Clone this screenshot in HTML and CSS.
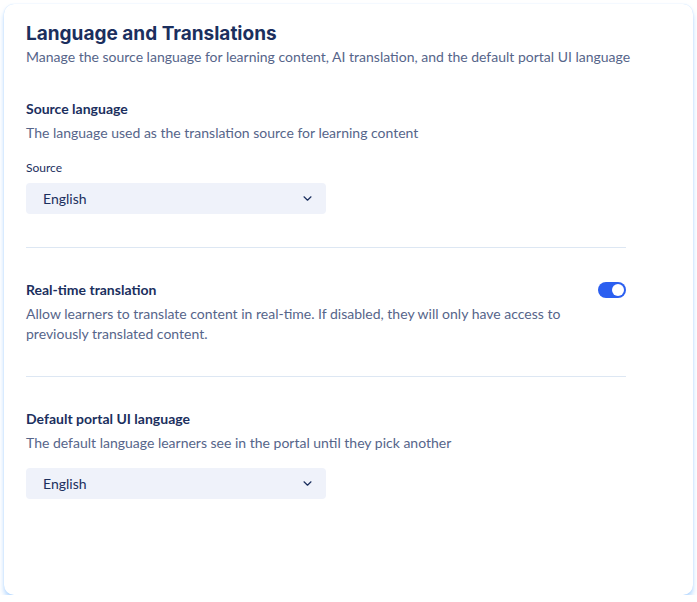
FILE: index.html
```html
<!DOCTYPE html>
<html>
<head>
<link rel="stylesheet" href="styles.css">
</head>
<body>
	<div class="cartao">
		<h1 class="titulo">Language and Translations</h1>
		<p class="subtitulo">Manage the source language for learning content, AI translation, and the default portal UI language</p>

		<div class="secao">
			<h2 class="secao_titulo">Source language</h2>
			<p class="secao_desc">The language used as the translation source for learning content</p>
			<label class="rotulo">Source</label>
			<div class="seletor">
				<span>English</span>
				<svg width="9" height="5" viewBox="0 0 9 5"><path d="M1 0.8l3.5 3.4 3.5-3.4" fill="none" stroke="#1b2f5e" stroke-width="1.2" stroke-linecap="round" stroke-linejoin="round"/></svg>
			</div>
		</div>

		<hr class="divisor primeiro">

		<div class="secao">
			<div class="linha">
				<h2 class="secao_titulo">Real-time translation</h2>
				<div class="chave"><div class="bolinha"></div></div>
			</div>
			<p class="secao_desc largo">Allow learners to translate content in real-time. If disabled, they will only have access to previously translated content.</p>
		</div>

		<hr class="divisor">

		<div class="secao">
			<h2 class="secao_titulo">Default portal UI language</h2>
			<p class="secao_desc">The default language learners see in the portal until they pick another</p>
			<div class="seletor mais_espaco">
				<span>English</span>
				<svg width="9" height="5" viewBox="0 0 9 5"><path d="M1 0.8l3.5 3.4 3.5-3.4" fill="none" stroke="#1b2f5e" stroke-width="1.2" stroke-linecap="round" stroke-linejoin="round"/></svg>
			</div>
		</div>
	</div>
</body>
</html>
```

FILE: styles.css
```css
body{
	margin: 0;
	background-color: white;
	font-family: "Lato", "Liberation Sans", sans-serif;
}

.cartao{
	margin: 4px 4px 0 4px;
	height: 591px;
	box-sizing: border-box;
	padding: 17px 22px 0 22px;
	background-color: white;
	border-radius: 10px;
	box-shadow: 0 4px 5px rgba(150, 200, 255, 0.7), 0 0 1px rgba(150, 200, 255, 0.7);
}

.titulo{
	margin: 0;
	font-family: "Inter", sans-serif;
	font-size: 19px;
	font-weight: 700;
	color: #1b2f5e;
	line-height: 26px;
}

.subtitulo{
	margin: 0;
	font-size: 14px;
	line-height: 20px;
	color: #56658a;
}

.secao{
	width: 600px;
	margin-top: 32px;
}

.secao_titulo{
	margin: 0;
	font-size: 14px;
	font-weight: 700;
	color: #1b2f5e;
	line-height: 20px;
}

.secao_desc{
	margin: 4px 0 0 0;
	font-size: 14px;
	line-height: 20px;
	color: #56658a;
}

.largo{
	width: 540px;
}

.rotulo{
	display: block;
	margin-top: 17px;
	font-size: 12px;
	line-height: 16px;
	color: #1b2f5e;
}

.seletor{
	width: 300px;
	height: 31px;
	margin-top: 7px;
	box-sizing: border-box;
	padding: 0 14px 0 17px;
	display: flex;
	align-items: center;
	justify-content: space-between;
	background-color: #eff2fa;
	border-radius: 4px;
	font-size: 14px;
	color: #1b2f5e;
}

.mais_espaco{
	margin-top: 15px;
}

.divisor{
	width: 600px;
	margin: 32px 0 0 0;
	border: none;
	border-top: 1px solid #dde7f3;
}

.primeiro{
	margin-top: 33px;
}

.linha{
	display: flex;
	justify-content: space-between;
	align-items: center;
}

.chave{
	width: 28px;
	height: 16px;
	border-radius: 8px;
	background-color: #2b5ff0;
	position: relative;
}

.bolinha{
	position: absolute;
	right: 2px;
	top: 2px;
	width: 12px;
	height: 12px;
	border-radius: 50%;
	background-color: white;
}
```
